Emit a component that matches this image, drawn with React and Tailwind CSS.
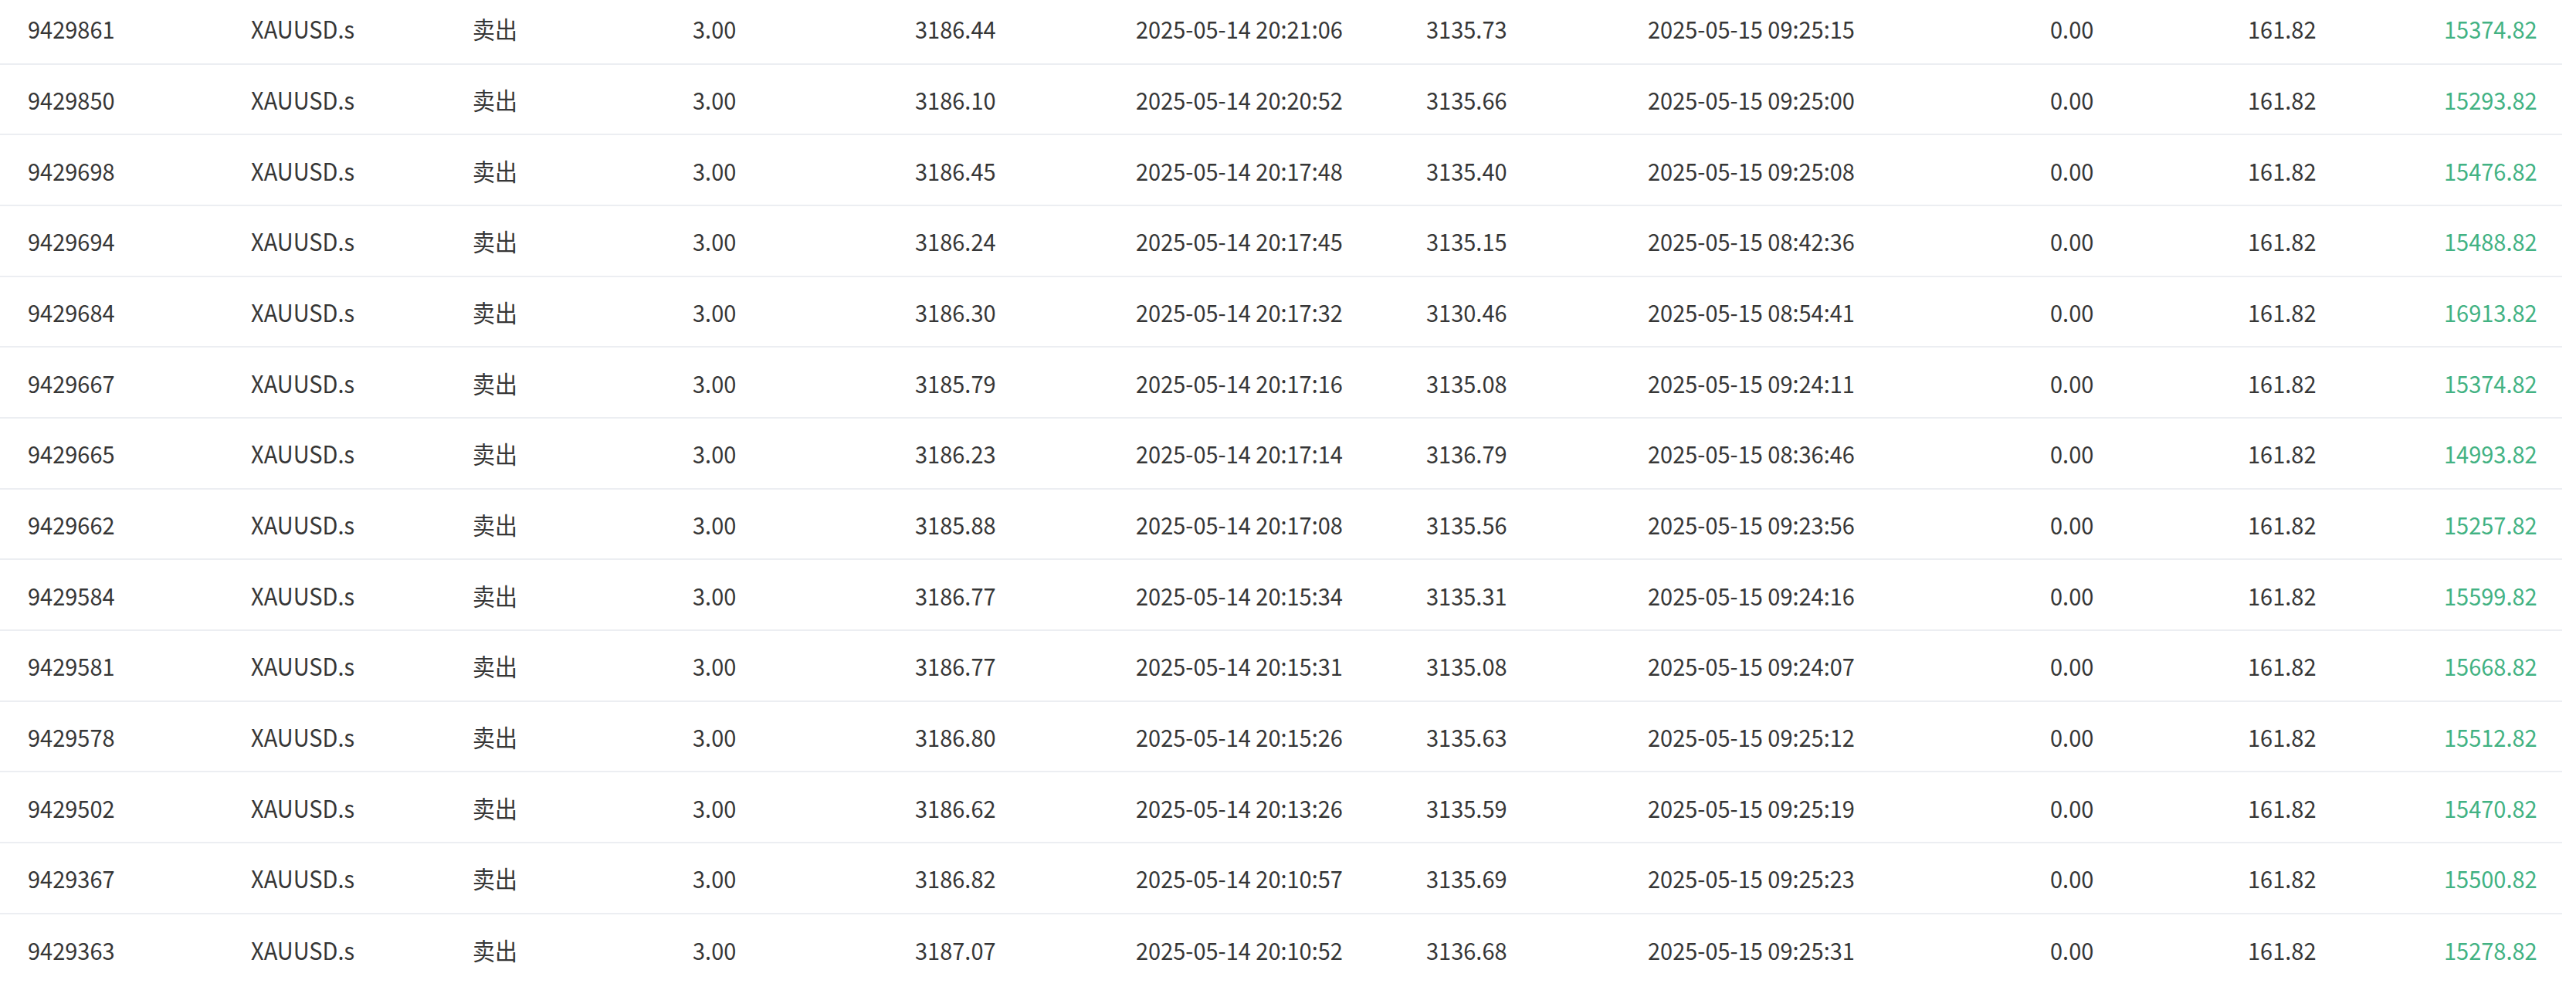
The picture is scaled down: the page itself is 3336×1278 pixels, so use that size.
import React from "react";

const rows = [
  ["9429861", "3186.44", "2025-05-14 20:21:06", "3135.73", "2025-05-15 09:25:15", "15374.82"],
  ["9429850", "3186.10", "2025-05-14 20:20:52", "3135.66", "2025-05-15 09:25:00", "15293.82"],
  ["9429698", "3186.45", "2025-05-14 20:17:48", "3135.40", "2025-05-15 09:25:08", "15476.82"],
  ["9429694", "3186.24", "2025-05-14 20:17:45", "3135.15", "2025-05-15 08:42:36", "15488.82"],
  ["9429684", "3186.30", "2025-05-14 20:17:32", "3130.46", "2025-05-15 08:54:41", "16913.82"],
  ["9429667", "3185.79", "2025-05-14 20:17:16", "3135.08", "2025-05-15 09:24:11", "15374.82"],
  ["9429665", "3186.23", "2025-05-14 20:17:14", "3136.79", "2025-05-15 08:36:46", "14993.82"],
  ["9429662", "3185.88", "2025-05-14 20:17:08", "3135.56", "2025-05-15 09:23:56", "15257.82"],
  ["9429584", "3186.77", "2025-05-14 20:15:34", "3135.31", "2025-05-15 09:24:16", "15599.82"],
  ["9429581", "3186.77", "2025-05-14 20:15:31", "3135.08", "2025-05-15 09:24:07", "15668.82"],
  ["9429578", "3186.80", "2025-05-14 20:15:26", "3135.63", "2025-05-15 09:25:12", "15512.82"],
  ["9429502", "3186.62", "2025-05-14 20:13:26", "3135.59", "2025-05-15 09:25:19", "15470.82"],
  ["9429367", "3186.82", "2025-05-14 20:10:57", "3135.69", "2025-05-15 09:25:23", "15500.82"],
  ["9429363", "3187.07", "2025-05-14 20:10:52", "3136.68", "2025-05-15 09:25:31", "15278.82"],
];

function Cell({ children, green }) {
  return (
    <div className={"pl-[36px] flex items-center whitespace-nowrap " + (green ? "text-[#42b283]" : "")}>
      <span className="inline-block origin-left scale-x-[0.935]">{children}</span>
    </div>
  );
}

export default function App() {
  return (
    <div className="w-[3336px] h-[1278px] overflow-hidden bg-white">
      <div
        className="w-[3318px] -mt-[8px] text-[31px] text-[#363636] leading-none"
        style={{ fontFamily: '"Noto Sans CJK SC", "Noto Sans", sans-serif' }}
      >
        {rows.map((r) => (
          <div
            key={r[0] + r[2]}
            className="grid grid-cols-[289px_287px_285px_288px_286px_376px_287px_521px_256px_254px_189px] h-[91.67px] border-b-2 border-[#eceef2] last:border-b-0"
          >
            <Cell>{r[0]}</Cell>
            <Cell>XAUUSD.s</Cell>
            <Cell>卖出</Cell>
            <Cell>3.00</Cell>
            <Cell>{r[1]}</Cell>
            <Cell>{r[2]}</Cell>
            <Cell>{r[3]}</Cell>
            <Cell>{r[4]}</Cell>
            <Cell>0.00</Cell>
            <Cell>161.82</Cell>
            <Cell green>{r[5]}</Cell>
          </div>
        ))}
      </div>
    </div>
  );
}
